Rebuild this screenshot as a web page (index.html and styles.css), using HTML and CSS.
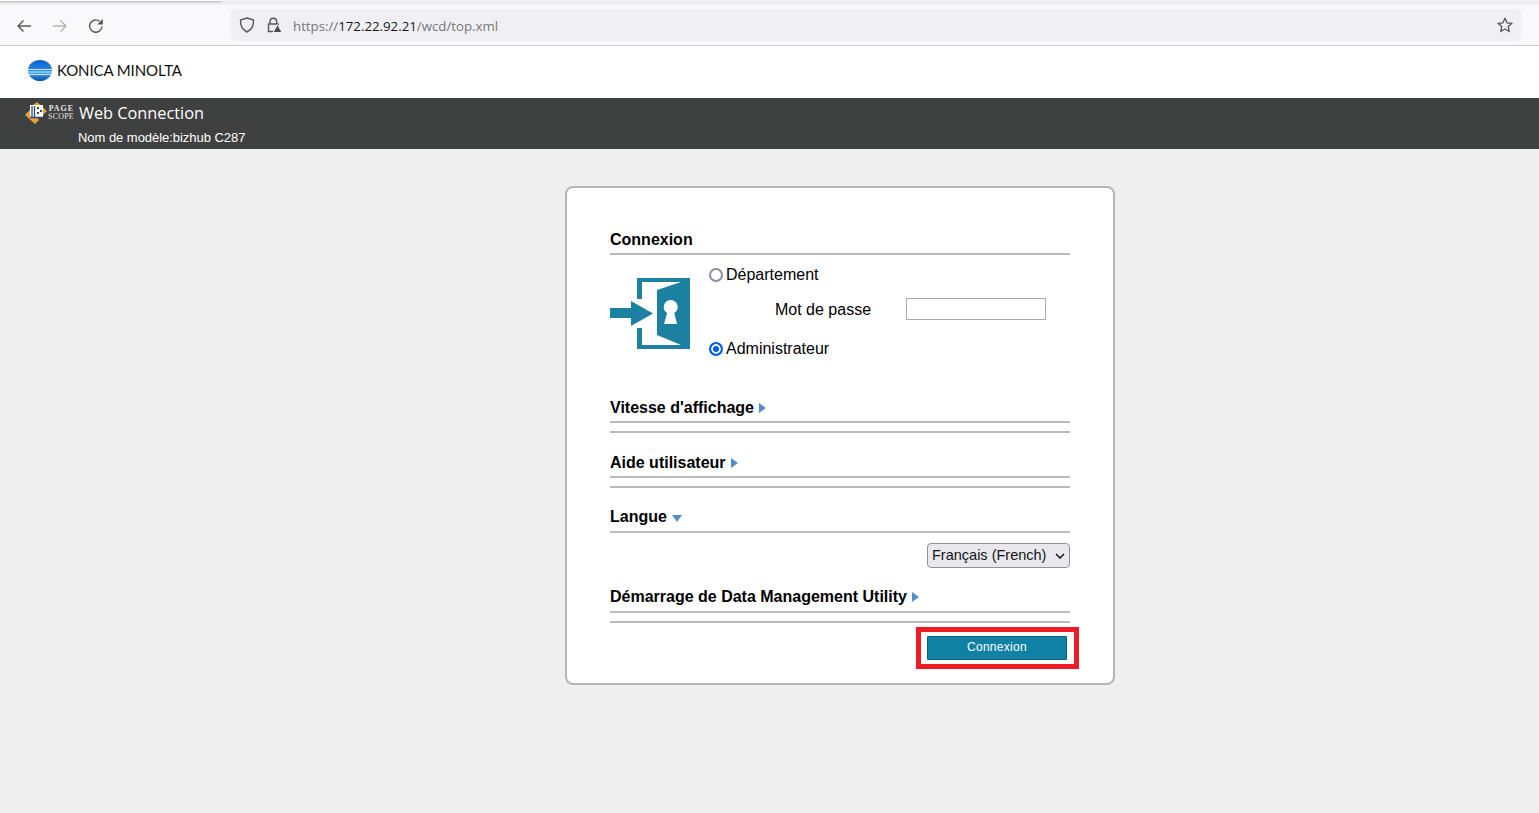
FILE: index.html
```html
<!DOCTYPE html>
<html lang="fr">
<head>
    <meta charset="UTF-8">
    <meta name="viewport" content="width=device-width, initial-scale=1.0">
    <title>Web Connection</title>
    <link rel="stylesheet" href="styles.css">
</head>
<body>
    <div class="browser-top">
        <div class="tab-strip"><div class="tab"></div></div>
        <div class="toolbar">
            <div class="nav-buttons">
                <svg class="nav-icon" viewBox="0 0 16 16"><path d="M15 8H2M7.500 2.500 2 8l5.500 5.500" fill="none" stroke="#55555a" stroke-width="1.400"/></svg>
                <svg class="nav-icon" viewBox="0 0 16 16"><path d="M1 8h13M8.500 2.500 14 8l-5.500 5.500" fill="none" stroke="#b4b4b8" stroke-width="1.400"/></svg>
                <svg class="nav-icon" viewBox="0 0 16 16"><path d="M14 8.500a6.200 6.200 0 1 1-2.200-5.200" fill="none" stroke="#55555a" stroke-width="1.400"/><path d="M14.800 1v5.500H9.300z" fill="#55555a"/></svg>
            </div>
            <div class="url-bar">
                <svg class="shield" viewBox="0 0 16 16"><path d="M8 1 14.500 3c.3 5.500-1.500 9.500-6.500 12C3 12.500 1.200 8.500 1.500 3z" fill="none" stroke="#55555a" stroke-width="1.400"/></svg>
                <svg class="lock" viewBox="0 0 16 16">
                    <path d="M4 7V4.500a3.300 3.300 0 0 1 6.600 0V7" fill="none" stroke="#55555a" stroke-width="1.400"/>
                    <path d="M2.500 7h9.500v7.500H2.500z" fill="none" stroke="#55555a" stroke-width="1.400"/>
                    <path d="M11.500 7.500 16 15.500H7z" fill="#4a4a4f" stroke="#f0f0f4"/>
                </svg>
                <span class="url"><span class="url-dim">https://</span>172.22.92.21<span class="url-dim">/wcd/top.xml</span></span>
                <svg class="star" viewBox="0 0 16 16"><path d="M8 1.200 10 5.800l5 .5-3.800 3.300 1.100 4.900L8 12l-4.300 2.500 1.100-4.900L1 6.300l5-.5z" fill="none" stroke="#55555a" stroke-width="1.300" stroke-linejoin="round"/></svg>
            </div>
        </div>
    </div>

    <div class="logo-band">
        <svg class="km-globe" viewBox="0 0 24 21">
            <defs>
                <linearGradient id="globeFill" x1="0" y1="0" x2="0" y2="1">
                    <stop offset="0" stop-color="#0b5ec8"/>
                    <stop offset="0.450" stop-color="#1f86e2"/>
                    <stop offset="0.600" stop-color="#3aa4ee"/>
                    <stop offset="1" stop-color="#0a4fb4"/>
                </linearGradient>
            </defs>
            <ellipse cx="12" cy="10.500" rx="12" ry="10.500" fill="url(#globeFill)"/>
            <path d="M0 9.500h24M0 12h24M1 14.500h22" stroke="#fff" stroke-width="1" opacity="0.800"/>
        </svg>
        <span class="km-name">KONICA MINOLTA</span>
    </div>

    <div class="title-band">
        <div class="title-row">
            <svg class="ps-icon" viewBox="0 0 22 22">
                <path d="M12 0 22 9 17 14 8 3z" fill="#e9a23b"/>
                <path d="M0 13 5 8 14 18 10 22z" fill="#e9a23b"/>
                <path d="M5 3h13v13H5z" fill="#fff"/>
                <path d="M7 4v11M9.500 4v11M5 15.500h13" stroke="#2f4a78" stroke-width="1.300"/>
                <path d="M12 5h2v2h-2zM15 8h2v2h-2zM12 10h2v2h-2z" fill="#2f4a78"/>
            </svg>
            <span class="ps-word"><span class="ps-page">PAGE</span><span>SCOPE</span></span>
            <span class="product">Web Connection</span>
        </div>
        <div class="model">Nom de modèle:bizhub C287</div>
    </div>

    <main class="page">
        <form class="login-card" onsubmit="return false">
            <h2 class="section-title first">Connexion</h2>
            <div class="login-body">
                <svg class="door-icon" viewBox="0 0 80 72">
                    <path d="M27 0h53v71H27z" fill="#1c80a1"/>
                    <path d="M32 4h39L47 12v45l24 10H32z" fill="#fff"/>
                    <path d="M26 21h7v29h-7z" fill="#fff"/>
                    <path d="M0 30h21v-7l22 12.500-22 12.500v-8H0z" fill="#1c80a1"/>
                    <circle cx="60.700" cy="29" r="7" fill="#fff"/>
                    <path d="M58 32h5.500l3.500 14H54z" fill="#fff"/>
                </svg>
                <div class="login-options">
                    <label class="radio-row"><input type="radio" name="mode">Département</label>
                    <div class="password-row">
                        <label for="pass">Mot de passe</label>
                        <input type="password" id="pass">
                    </div>
                    <label class="radio-row"><input type="radio" name="mode" checked>Administrateur</label>
                </div>
            </div>

            <h2 class="section-title">Vitesse d'affichage<i class="arrow-right"></i></h2>
            <div class="rule"></div>

            <h2 class="section-title spaced">Aide utilisateur<i class="arrow-right"></i></h2>
            <div class="rule"></div>

            <h2 class="section-title spaced raised">Langue<i class="arrow-down"></i></h2>
            <div class="lang-row">
                <div class="select-wrap">
                    <select class="lang-select">
                        <option>Français (French)</option>
                    </select>
                    <svg class="select-chevron" viewBox="0 0 10 6"><path d="M1 1l4 4 4-4" fill="none" stroke="#15141a" stroke-width="1.500"/></svg>
                </div>
            </div>

            <h2 class="section-title raised">Démarrage de Data Management Utility<i class="arrow-right"></i></h2>
            <div class="rule"></div>

            <div class="submit-row">
                <div class="highlight">
                    <button type="submit" class="submit-btn">Connexion</button>
                </div>
            </div>
        </form>
    </main>
</body>
</html>
```

FILE: styles.css
```css
* {
    box-sizing: border-box;
}
html, body {
    height: 100%;
}
body {
    margin: 0;
    display: flex;
    flex-direction: column;
    overflow: hidden;
    background-color: #efefef;
    font-family: "Liberation Sans", Arial, sans-serif;
    color: #000;
}

/* browser chrome */
.tab-strip {
    height: 5px;
    background-color: #f0f0f4;
}
.tab {
    width: 222px;
    height: 1px;
    background-color: #fff;
    box-shadow: 0 1px 2px rgba(0, 0, 0, 0.4);
}
.toolbar {
    height: 41px;
    display: flex;
    align-items: flex-start;
    padding: 4px 18px 0 16px;
    background-color: #f9f9fb;
    border-bottom: 1px solid #ccc;
}
.nav-buttons {
    display: flex;
    gap: 20px;
    padding-top: 9px;
    width: 215px;
}
.nav-icon {
    width: 16px;
    height: 16px;
}
.url-bar {
    flex: 1;
    height: 32px;
    display: flex;
    align-items: center;
    padding: 0 8px;
    background-color: #f0f0f4;
    border-radius: 4px;
}
.shield {
    width: 16px;
    height: 16px;
}
.lock {
    width: 16px;
    height: 16px;
    margin-left: 11px;
}
.url {
    margin: 2px 0 0 11px;
    font-family: "Open Sans", sans-serif;
    font-size: 13.250px;
    color: #15141a;
}
.url-dim {
    color: #75757b;
}
.star {
    width: 16px;
    height: 16px;
    margin-left: auto;
}

/* page header */
.logo-band {
    height: 52px;
    display: flex;
    align-items: center;
    padding: 0 0 4px 28px;
    background-color: #fff;
}
.km-globe {
    width: 24px;
    height: 21px;
}
.km-name {
    margin: 0 0 1px 5px;
    font-family: Lato, sans-serif;
    font-size: 15px;
    letter-spacing: -0.100px;
    color: #111;
}
.title-band {
    height: 51px;
    padding: 3px 0 0 25px;
    background-color: #3f4040;
    color: #fff;
}
.title-row {
    display: flex;
    align-items: center;
    height: 24px;
}
.ps-icon {
    width: 22px;
    height: 22px;
}
.ps-word {
    display: flex;
    flex-direction: column;
    align-items: flex-end;
    margin-left: 1px;
    font-family: "Liberation Serif", serif;
    font-size: 8px;
    line-height: 8px;
    letter-spacing: 0.200px;
    color: #e4e4e4;
}
.ps-page {
    font-weight: bold;
    letter-spacing: 0.900px;
}
.product {
    margin-left: 5px;
    font-family: "Open Sans", sans-serif;
    font-size: 16.300px;
}
.model {
    margin: 4px 0 0 53px;
    font-size: 13px;
    line-height: 18px;
    letter-spacing: -0.040px;
}

/* login card */
.page {
    flex: 1;
    padding: 37px 0 0 565px;
}
.login-card {
    width: 550px;
    height: 499px;
    padding: 33px 43px 0;
    background-color: #fff;
    border: 2px solid #b5b5b5;
    border-radius: 8px;
}
.section-title {
    margin: 0;
    height: 28px;
    padding-top: 3px;
    font-size: 16px;
    line-height: 20px;
    font-weight: bold;
    border-bottom: 2px solid #bbb;
}
.section-title.first {
    height: 34px;
    padding-top: 9px;
}
.section-title.spaced {
    margin-top: 17px;
}
.section-title.raised {
    padding-top: 2px;
}
.rule {
    height: 2px;
    margin-top: 8px;
    background-color: #bbb;
}
.arrow-right {
    display: inline-block;
    margin-left: 5px;
    border-left: 7px solid #4f8fc8;
    border-top: 5px solid transparent;
    border-bottom: 5px solid transparent;
}
.arrow-down {
    display: inline-block;
    margin-left: 5px;
    border-top: 7px solid #4f8fc8;
    border-left: 5px solid transparent;
    border-right: 5px solid transparent;
}
.login-body {
    display: flex;
    height: 140px;
    padding-top: 23px;
}
.door-icon {
    width: 80px;
    height: 72px;
}
.login-options {
    margin-top: -14px;
    margin-left: 18px;
    font-size: 16px;
}
.radio-row {
    display: flex;
    align-items: center;
    height: 22px;
}
.radio-row input {
    appearance: none;
    width: 14px;
    height: 14px;
    margin: 0 3px 0 1px;
    background-color: #fff;
    border: 2px solid #8f8f9d;
    border-radius: 50%;
}
.radio-row input:checked {
    border-color: #0060df;
    background-color: #0060df;
    box-shadow: inset 0 0 0 2px #fff;
}
.password-row {
    display: flex;
    align-items: center;
    height: 52px;
    padding: 0 0 4px 67px;
}
.password-row input {
    width: 140px;
    height: 22px;
    margin: -2px 0 0 35px;
    border: 1px solid #aaa;
    background-color: #fff;
}
.lang-row {
    display: flex;
    justify-content: flex-end;
    height: 52px;
    padding-top: 10px;
}
.select-wrap {
    position: relative;
    height: 25px;
}
.lang-select {
    appearance: none;
    display: block;
    width: 143px;
    height: 25px;
    padding: 0 0 2px 4px;
    font-family: "Liberation Sans", Arial, sans-serif;
    font-size: 14.500px;
    color: #15141a;
    background-color: #e9e9ed;
    border: 1px solid #8f8f9d;
    border-radius: 4px;
}
.select-chevron {
    position: absolute;
    top: 10px;
    right: 5px;
    width: 10px;
    height: 6px;
    pointer-events: none;
}
.submit-row {
    display: flex;
    justify-content: flex-end;
    margin: 4px -9px 0 0;
}
.highlight {
    width: 163px;
    height: 42px;
    padding: 4px 7px 0 6px;
    border: 5px solid #ed1c24;
}
.submit-btn {
    display: block;
    width: 140px;
    height: 24px;
    padding: 0 0 2px;
    background-color: #0f81a5;
    border: 1px solid #0b5f78;
    border-radius: 1px;
    color: #fff;
    font-family: "Liberation Sans", Arial, sans-serif;
    font-size: 12px;
    letter-spacing: 0.300px;
}
```
